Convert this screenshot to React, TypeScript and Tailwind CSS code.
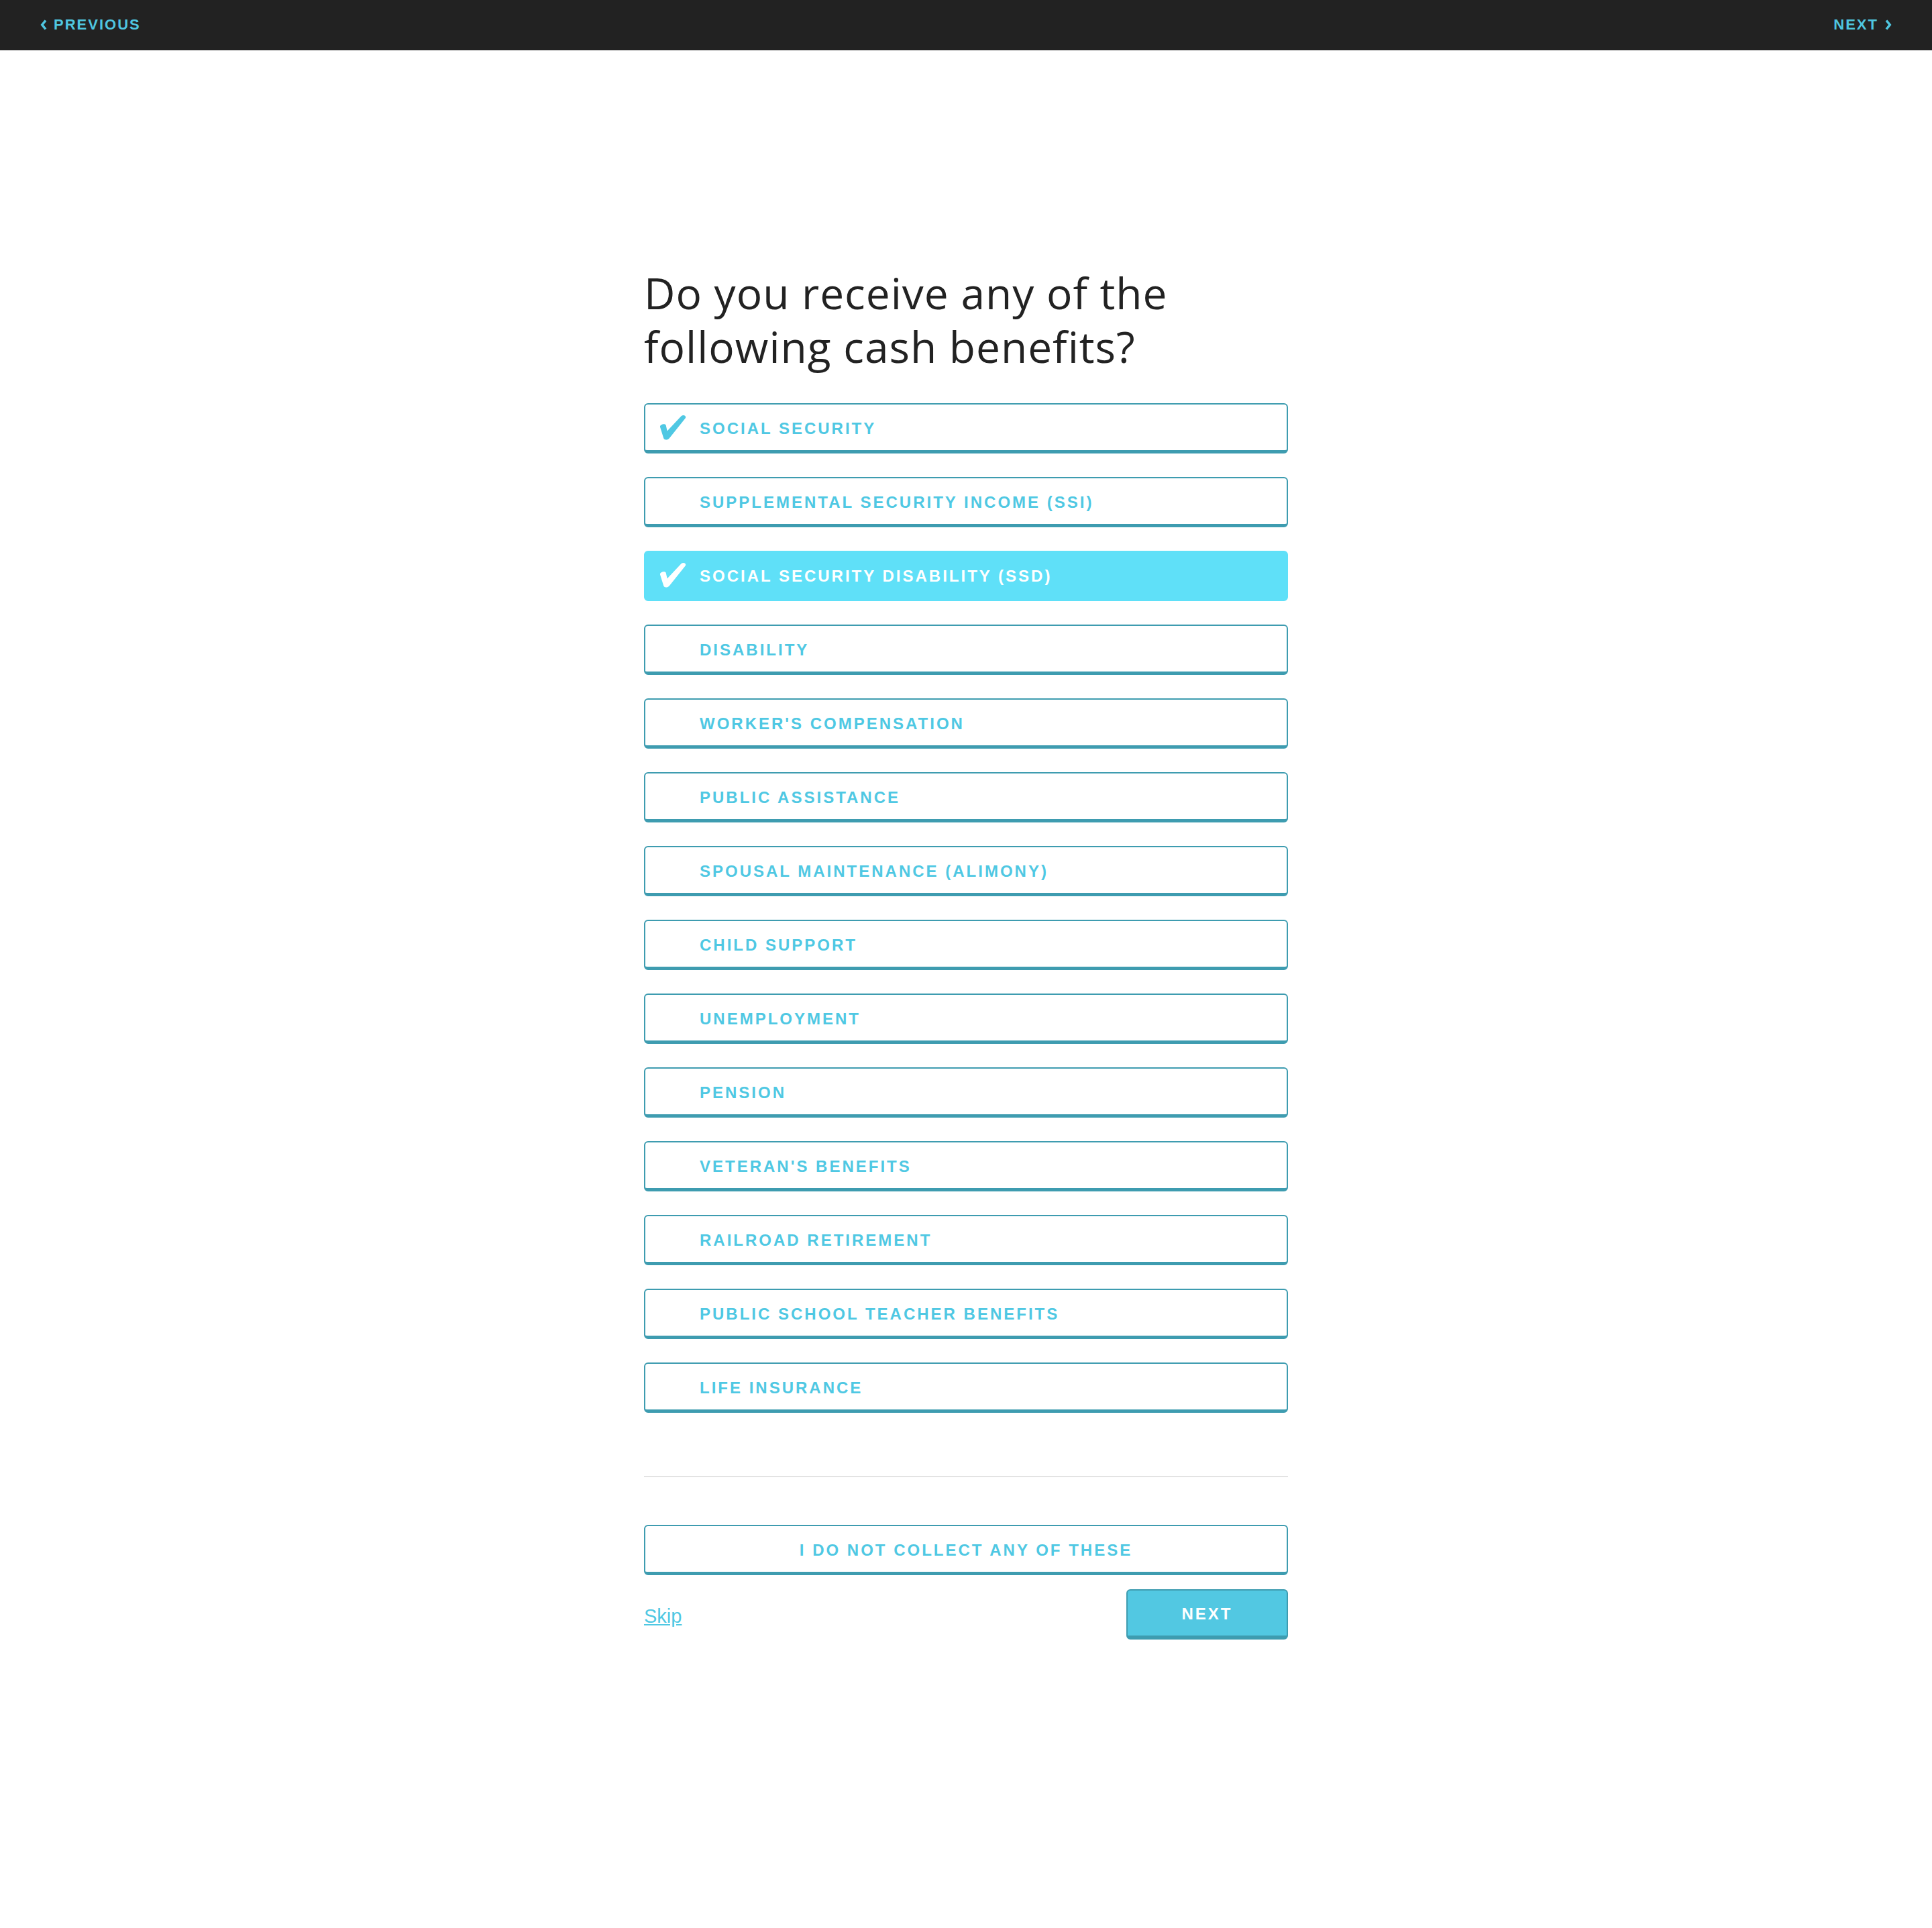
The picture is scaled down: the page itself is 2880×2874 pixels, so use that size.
import { useState } from "react";

const BENEFITS = [
  "Social Security",
  "Supplemental Security Income (SSI)",
  "Social Security Disability (SSD)",
  "Disability",
  "Worker's Compensation",
  "Public Assistance",
  "Spousal Maintenance (Alimony)",
  "Child Support",
  "Unemployment",
  "Pension",
  "Veteran's Benefits",
  "Railroad Retirement",
  "Public School Teacher Benefits",
  "Life Insurance",
];

function Check({ className }: { className?: string }) {
  return (
    <svg viewBox="0 0 40 38" className={className} fill="currentColor">
      <path d="M1 18.5C0.2 15 7.5 12.5 9.6 15.6L11.6 24.5L32.5 2.2C35.5 -0.8 41 1.8 38.6 5.6L14.8 35.2C12 38.6 6.6 38.4 6 34.6Z" />
    </svg>
  );
}

function Chevron({ dir }: { dir: "left" | "right" }) {
  return (
    <svg viewBox="0 0 10 16" className="h-[16px] w-[10px]" fill="none" stroke="currentColor" strokeWidth="3.6">
      {dir === "left" ? <path d="M8 1.5L2.8 8L8 14.5" /> : <path d="M2 1.5L7.2 8L2 14.5" />}
    </svg>
  );
}

export default function App() {
  const [selected, setSelected] = useState<string[]>([
    "Social Security",
    "Social Security Disability (SSD)",
  ]);

  function toggle(name: string) {
    setSelected((prev) =>
      prev.includes(name) ? prev.filter((n) => n !== name) : [...prev, name]
    );
  }

  return (
    <div className="min-h-screen bg-white font-['Liberation_Sans',Arial,sans-serif]">
      <header className="flex h-[75px] items-center justify-between bg-[#222222] px-[60px] text-[22px] font-bold uppercase tracking-[2px] text-[#4fc6e0]">
        <a href="#" className="flex items-center gap-[10px] pb-[2px]">
          <Chevron dir="left" />
          <span>Previous</span>
        </a>
        <a href="#" className="flex items-center gap-[10px] pb-[2px]">
          <span>Next</span>
          <Chevron dir="right" />
        </a>
      </header>

      <main className="mx-auto w-[960px] pt-[322px] pb-[400px]">
        <h1 className="font-['Open_Sans',sans-serif] text-[64px] font-normal leading-[80px] tracking-[1px] text-[#222222]">
          Do you receive any of the
          <br />
          following cash benefits?
        </h1>

        <div className="mt-[44px] flex flex-col gap-[35px]">
          {BENEFITS.map((name, i) => {
            const checked = selected.includes(name);
            const active = i === 2 && checked;
            return (
              <button
                key={name}
                type="button"
                onClick={() => toggle(name)}
                className={
                  active
                    ? "flex h-[75px] items-center gap-[20px] rounded-[6px] border-2 border-b-[5px] border-[#5fe0f8] bg-[#5fe0f8] pl-[21px] text-left text-[24px] font-bold uppercase tracking-[3px] text-white"
                    : "flex h-[75px] items-center gap-[20px] rounded-[6px] border-2 border-b-[5px] border-[#3e9cb0] bg-white pl-[21px] text-left text-[24px] font-bold uppercase tracking-[3px] text-[#4fc8e3]"
                }
              >
                <span className="w-[40px]">
                  {checked ? <Check className="h-[38px] w-[40px]" /> : null}
                </span>
                <span className="pt-[3px]">{name}</span>
              </button>
            );
          })}
        </div>

        <div className="mt-[94px] h-[2px] bg-[#e3e3e3]" />

        <button
          type="button"
          className="mt-[71px] flex h-[75px] w-full items-center justify-center rounded-[6px] border-2 border-b-[5px] border-[#3e9cb0] bg-white pt-[3px] text-[24px] font-bold uppercase tracking-[3px] text-[#4fc8e3]"
        >
          I do not collect any of these
        </button>

        <div className="mt-[21px] flex items-center justify-between">
          <a href="#" className="pt-[6px] text-[29px] text-[#4fc8e3] underline">
            Skip
          </a>
          <button
            type="button"
            className="flex h-[75px] w-[241px] items-center justify-center rounded-[6px] border-2 border-b-[6px] border-[#3e9cb0] bg-[#52c8e2] pt-[3px] text-[24px] font-bold uppercase tracking-[3px] text-white"
          >
            Next
          </button>
        </div>
      </main>
    </div>
  );
}
